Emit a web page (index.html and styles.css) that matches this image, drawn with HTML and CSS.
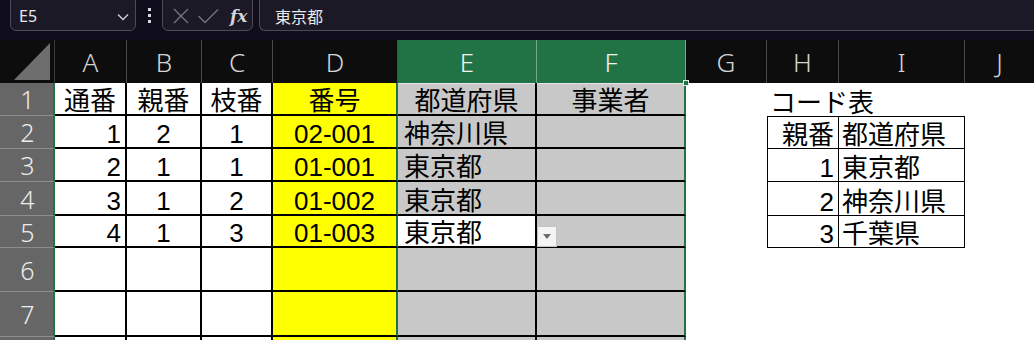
FILE: index.html
```html
<!DOCTYPE html>
<html lang="ja">
<head>
<meta charset="utf-8">
<link rel="stylesheet" href="styles.css">
</head>
<body>
<div class="topbar">
  <div class="namebox"><span class="nb-text">E5</span>
    <svg class="chev" width="12" height="8" viewBox="0 0 12 8"><path d="M1 1.5 L6 6.5 L11 1.5" fill="none" stroke="#cfcfd6" stroke-width="1.4"/></svg>
  </div>
  <div class="kebab"><i></i><i></i><i></i></div>
  <div class="fbtns">
    <svg width="18" height="18" viewBox="0 0 18 18"><path d="M2 2 L16 16 M16 2 L2 16" stroke="#75737f" stroke-width="1.4" fill="none"/></svg>
    <svg width="22" height="18" viewBox="0 0 22 18"><path d="M1.5 9 L8 15.5 L21 2.5" stroke="#75737f" stroke-width="1.4" fill="none"/></svg>
    <span class="fx">fx</span>
  </div>
  <div class="finput">東京都</div>
</div>

<div class="sheet">
  <!-- column header row -->
  <div class="corner"><svg width="55" height="43" viewBox="0 0 55 43"><path d="M14 40 L50 40 L50 3 Z" fill="#6e6e6e"/></svg></div>
  <div class="ch">A</div><div class="ch">B</div><div class="ch">C</div><div class="ch">D</div>
  <div class="ch sel">E</div><div class="ch sel">F</div>
  <div class="ch">G</div><div class="ch">H</div><div class="ch">I</div><div class="ch last">J</div>

  <!-- row 1 -->
  <div class="rh">1</div>
  <div class="c ctr">通番</div><div class="c ctr">親番</div><div class="c ctr">枝番</div><div class="c y ctr">番号</div>
  <div class="c g e ctr top">都道府県</div><div class="c g f ctr top">事業者<span class="handle"></span></div>
  <div class="o"></div><div class="o lbl">コード表</div><div class="o"></div><div class="o"></div>

  <!-- row 2 -->
  <div class="rh">2</div>
  <div class="c r">1</div><div class="c ctr">2</div><div class="c ctr">1</div><div class="c y ctr">02-001</div>
  <div class="c g e">神奈川県</div><div class="c g f"></div>
  <div class="o"></div><div class="o t tl tt r">親番</div><div class="o t tr tt">都道府県</div><div class="o"></div>

  <!-- row 3 -->
  <div class="rh">3</div>
  <div class="c r">2</div><div class="c ctr">1</div><div class="c ctr">1</div><div class="c y ctr">01-001</div>
  <div class="c g e">東京都</div><div class="c g f"></div>
  <div class="o"></div><div class="o t tl r">1</div><div class="o t tr">東京都</div><div class="o"></div>

  <!-- row 4 -->
  <div class="rh">4</div>
  <div class="c r">3</div><div class="c ctr">1</div><div class="c ctr">2</div><div class="c y ctr">01-002</div>
  <div class="c g e">東京都</div><div class="c g f"></div>
  <div class="o"></div><div class="o t tl r">2</div><div class="o t tr">神奈川県</div><div class="o"></div>

  <!-- row 5 -->
  <div class="rh">5</div>
  <div class="c r">4</div><div class="c ctr">1</div><div class="c ctr">3</div><div class="c y ctr">01-003</div>
  <div class="c e active">東京都<span class="dd"><svg width="8" height="5" viewBox="0 0 8 5"><path d="M0 0 L8 0 L4 5 Z" fill="#6b6b6b"/></svg></span></div><div class="c g f"></div>
  <div class="o"></div><div class="o t tl r">3</div><div class="o t tr">千葉県</div><div class="o"></div>

  <!-- row 6 -->
  <div class="rh">6</div>
  <div class="c"></div><div class="c"></div><div class="c"></div><div class="c y"></div>
  <div class="c g e"></div><div class="c g f"></div>
  <div class="o"></div><div class="o"></div><div class="o"></div><div class="o"></div>

  <!-- row 7 -->
  <div class="rh">7</div>
  <div class="c"></div><div class="c"></div><div class="c"></div><div class="c y"></div>
  <div class="c g e"></div><div class="c g f"></div>
  <div class="o"></div><div class="o"></div><div class="o"></div><div class="o"></div>

  <!-- row 8 -->
  <div class="rh"></div>
  <div class="c"></div><div class="c"></div><div class="c"></div><div class="c y"></div>
  <div class="c g e"></div><div class="c g f"></div>
  <div class="o"></div><div class="o"></div><div class="o"></div><div class="o"></div>
</div>
</body>
</html>
```

FILE: styles.css
```css
* { box-sizing: border-box; }
html, body { margin: 0; padding: 0; }
body {
  width: 1034px;
  height: 340px;
  overflow: hidden;
  background: #ffffff;
  font-family: "Liberation Sans", "Noto Sans CJK JP", sans-serif;
}

/* ---------- formula bar ---------- */
.topbar {
  height: 40px;
  background: #0f0d1b;
  display: flex;
  align-items: flex-start;
  padding-left: 10px;
  overflow: hidden;
}
.namebox, .fbtns, .finput {
  margin-top: -6px;
  height: 37px;
  background: #1b1926;
  border: 1px solid #4c4a58;
  border-radius: 6px;
  display: flex;
  align-items: center;
  padding-top: 6px;
}
.namebox {
  width: 126px;
  padding-left: 8px;
  padding-right: 4px;
  justify-content: space-between;
}
.nb-text {
  color: #e8e8ec;
  font-family: "Noto Sans", "Liberation Sans", sans-serif;
  font-size: 16px;
}
.chev { margin-right: 2px; margin-top: 2px; }
.kebab {
  width: 26px;
  height: 31px;
  display: flex;
  flex-direction: column;
  align-items: center;
  justify-content: center;
  gap: 3px;
}
.kebab i {
  display: block;
  width: 3px;
  height: 3px;
  background: #d8d8de;
}
.fbtns {
  width: 91px;
  padding-left: 9px;
  gap: 7px;
}
.fx {
  color: #d4d4da;
  font-family: "DejaVu Serif", "Liberation Serif", serif;
  font-style: italic;
  font-weight: bold;
  font-size: 17px;
  margin-left: 4px;
}
.finput {
  margin-left: 6px;
  flex: 1;
  border-right: none;
  border-radius: 6px 0 0 6px;
  padding-left: 15px;
  color: #e8e8ec;
  font-family: "Noto Sans CJK JP", sans-serif;
  font-size: 16px;
}

/* ---------- sheet grid ---------- */
.sheet {
  display: grid;
  grid-template-columns: 55px 72px 75px 71px 125px 139px 149px 81px 72px 126px 69px;
  grid-template-rows: 43px 33px 33px 33px 34px 32px 44px 45px 40px;
  height: 300px;
  overflow: hidden;
  font-size: 26px;
  line-height: 26px;
}
.corner { background: #0d0d0d; border-right: 1px solid #3a3a3a; }
.corner svg { display: block; }
.ch {
  background: #0d0d0d;
  color: #d4d4d4;
  border-right: 1px solid #4a4a4a;
  font-family: "Noto Sans", "Liberation Sans", sans-serif;
  font-weight: 300;
  font-size: 26px;
  display: flex;
  align-items: center;
  justify-content: center;
}
.ch.sel { background: #217346; color: #f2f2f2; border-right-color: #76a98a; }
.ch.last { border-right: none; }

.rh {
  background: #666666;
  color: #ececec;
  border-right: 2px solid #217346;
  border-bottom: 1px solid #8e8e8e;
  font-family: "Noto Sans", "Liberation Sans", sans-serif;
  font-weight: 300;
  font-size: 25px;
  display: flex;
  align-items: center;
  justify-content: center;
  padding-left: 2px;
}

.c {
  background: #ffffff;
  color: #000;
  border-right: 2px solid #000;
  border-bottom: 2px solid #000;
  display: flex;
  align-items: flex-end;
  padding: 0 4px;
  white-space: nowrap;
  position: relative;
}
.c.ctr { justify-content: center; }
.c.r, .o.r { justify-content: flex-end; }
.c.y { background: #ffff00; border-right: 2px solid #217346; }
.c.g { background: #c8c8c8; }
.c.e { padding-left: 6px; }
.c.e.ctr { padding-left: 4px; }
.c.f { border-right: 2px solid #217346; }
.c.top { box-shadow: inset 0 1px 0 #e6e6e6; }
.c.active { background: #ffffff; z-index: 2; }

.dd {
  position: absolute;
  left: 139px;
  top: 10px;
  width: 20px;
  height: 21px;
  background: #f4f4f4;
  border: 1px solid #c4c4c4;
  display: flex;
  align-items: center;
  justify-content: center;
}
.handle {
  position: absolute;
  right: -5px;
  top: -3px;
  width: 6px;
  height: 6px;
  background: #217346;
  border: 1px solid #e8e8e8;
  z-index: 3;
}

.o {
  background: #ffffff;
  color: #000;
  display: flex;
  align-items: flex-end;
  padding: 0 3px;
  white-space: nowrap;
}
.o.lbl { overflow: visible; padding-left: 3px; position: relative; z-index: 1; background: transparent; }
.o.t { border-bottom: 1px solid #000; border-right: 1px solid #000; }
.o.tl { border-left: 1px solid #000; padding-right: 4px; }
.o.tr { padding-left: 3px; }
.o.tt { border-top: 1px solid #000; }
```
